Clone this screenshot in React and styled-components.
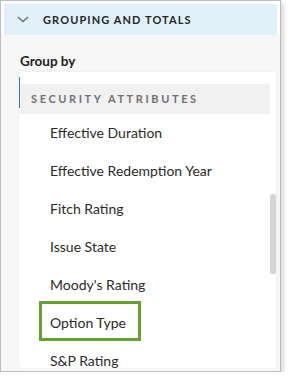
import React from 'react';
import styled, { createGlobalStyle } from 'styled-components';

const GlobalStyle = createGlobalStyle`
  body {
    margin: 0;
    background: #ffffff;
    font-family: Lato, "Liberation Sans", sans-serif;
  }
`;

const options = [
  'Effective Duration',
  'Effective Redemption Year',
  'Fitch Rating',
  'Issue State',
  "Moody's Rating",
  'Option Type',
  'S&P Rating',
];

const Chevron = () => (
  <svg width="12" height="7" viewBox="0 0 12 7">
    <path d="M1 1 L6 5.5 L11 1" fill="none" stroke="#6e6e6e" strokeWidth="1.5" />
  </svg>
);

const App = () => (
  <>
    <GlobalStyle />
    <Frame>
      <Header>
        <Chevron />
        <HeaderTitle>Grouping and Totals</HeaderTitle>
      </Header>
      <Body>
        <FieldLabel>Group by</FieldLabel>
        <Dropdown>
          <List>
            <GroupHeader>Security Attributes</GroupHeader>
            {options.map(name => (
              <Item key={name} highlighted={name === 'Option Type'}>
                {name}
              </Item>
            ))}
          </List>
          <ScrollTrack>
            <ScrollThumb />
          </ScrollTrack>
        </Dropdown>
      </Body>
    </Frame>
  </>
);

export default App;

const Frame = styled.div`
  box-sizing: border-box;
  width: 281px;
  height: 372px;
  border: 1px solid #bcbcbc;
  background: #ffffff;
  box-shadow: 3px 3px 4px rgba(0, 0, 0, 0.14);
  display: flex;
  flex-direction: column;
  overflow: hidden;
`;

const Header = styled.div`
  display: flex;
  align-items: center;
  gap: 14px;
  height: 31px;
  margin: 3px 3px 0;
  padding-left: 13px;
  background: #e2f0fa;
  flex-shrink: 0;
`;

const HeaderTitle = styled.span`
  font-size: 11px;
  line-height: 31px;
  font-weight: 700;
  letter-spacing: 1.1px;
  text-transform: uppercase;
  color: #262626;
`;

const Body = styled.div`
  flex: 1;
  display: flex;
  flex-direction: column;
  padding: 17px 4px 3px 18px;
  background: #f7f7f7;
  min-height: 0;
`;

const FieldLabel = styled.div`
  font-size: 13.5px;
  line-height: 18px;
  font-weight: 700;
  color: #222222;
  margin-bottom: 2px;
  padding-left: 1px;
`;

const Dropdown = styled.div`
  position: relative;
  flex: 1;
  display: flex;
  background: #ffffff;
  border-radius: 4px;
  box-shadow: 0 0 2px rgba(0, 0, 0, 0.08);
  overflow: hidden;
  min-height: 0;

  &::before {
    content: '';
    position: absolute;
    left: 0;
    top: 5px;
    width: 1px;
    height: 31px;
    background: #2f7fc8;
  }
`;

const List = styled.div`
  flex: 1;
  padding: 12px 0 0 1px;
`;

const GroupHeader = styled.div`
  height: 30px;
  line-height: 30px;
  padding-left: 11px;
  background: #f1f1f1;
  font-size: 11px;
  font-weight: 700;
  letter-spacing: 2.6px;
  text-transform: uppercase;
  color: #717171;
`;

const Item = styled.div`
  position: relative;
  height: 38px;
  line-height: 38px;
  padding-left: 30px;
  font-size: 14px;
  color: #2a2a2a;
  white-space: nowrap;

  &::after {
    content: ${props => (props.highlighted ? "''" : 'none')};
    position: absolute;
    left: 19px;
    top: -3px;
    width: 102px;
    height: 40px;
    box-sizing: border-box;
    border: 3px solid #66a032;
  }
`;

const ScrollTrack = styled.div`
  width: 6px;
  flex-shrink: 0;
`;

const ScrollThumb = styled.div`
  margin-top: 122px;
  height: 80px;
  background: #d5d5d5;
  border-radius: 3px 3px 2px 2px;
`;
